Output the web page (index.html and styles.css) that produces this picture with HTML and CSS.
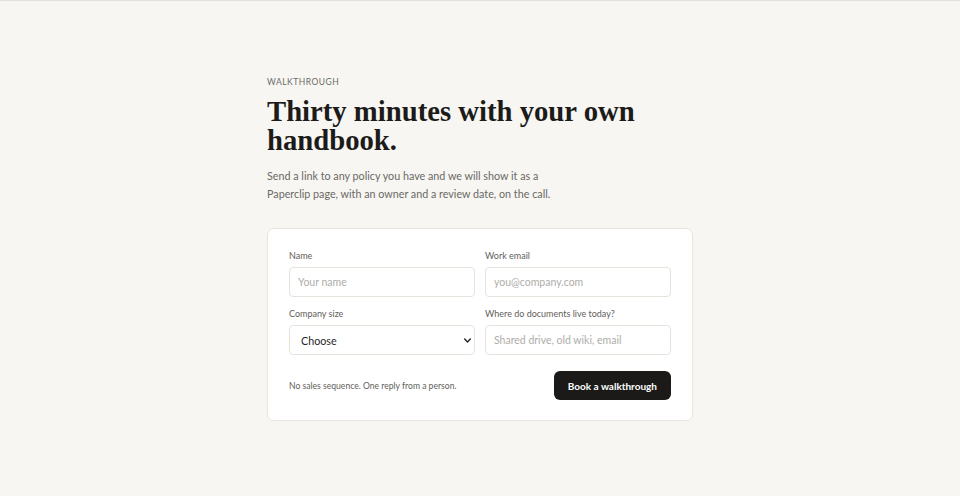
FILE: index.html
```html
<!DOCTYPE html>
<html lang="en">
<head>
<meta charset="utf-8">
<title>Book a walkthrough</title>
<link rel="stylesheet" href="styles.css">
</head>
<body>
<div class="topline"></div>
<main class="wrap">
  <p class="eyebrow">WALKTHROUGH</p>
  <h1 class="title">Thirty minutes with your own handbook.</h1>
  <p class="lede">Send a link to any policy you have and we will show it as a Paperclip page, with an owner and a review date, on the call.</p>
  <form class="card">
    <div class="grid">
      <label class="field">
        <span class="label">Name</span>
        <input class="input" type="text" placeholder="Your name">
      </label>
      <label class="field">
        <span class="label">Work email</span>
        <input class="input" type="email" placeholder="you@company.com">
      </label>
      <label class="field">
        <span class="label">Company size</span>
        <span class="select-wrap">
          <select class="input select">
            <option>Choose</option>
            <option>1–50</option>
            <option>51–200</option>
            <option>201+</option>
          </select>
          <svg class="chev" viewBox="0 0 10 6" width="7" height="5"><path d="M1 1l4 4 4-4" fill="none" stroke="#222" stroke-width="2" stroke-linecap="round" stroke-linejoin="round"/></svg>
        </span>
      </label>
      <label class="field">
        <span class="label">Where do documents live today?</span>
        <input class="input" type="text" placeholder="Shared drive, old wiki, email">
      </label>
    </div>
    <div class="foot">
      <span class="note">No sales sequence. One reply from a person.</span>
      <button class="btn" type="button">Book a walkthrough</button>
    </div>
  </form>
</main>
</body>
</html>
```
FILE: styles.css
```css
* { box-sizing: border-box; }
html, body { margin: 0; padding: 0; }
body {
  background: #f7f6f2;
  font-family: "Lato", "Liberation Sans", sans-serif;
  color: #1a1a1a;
  height: 496px;
  overflow: hidden;
}
.topline { height: 1px; background: #e4e1da; }
.wrap {
  width: 426px;
  margin: 0 auto;
  padding-top: 75px;
}
.eyebrow {
  margin: 0;
  font-size: 8.5px;
  letter-spacing: 0.5px;
  color: #6b6a66;
  line-height: 12px;
}
.title {
  margin: 9px 0 0;
  font-family: "Liberation Serif", "DejaVu Serif", serif;
  font-weight: 700;
  font-size: 28.7px;
  line-height: 29px;
  letter-spacing: 0;
  color: #1c1b19;
}
.lede {
  margin: 12px 0 0;
  font-size: 10.75px;
  line-height: 17.5px;
  color: #6a6965;
  width: 295px;
}
.card {
  margin-top: 26px;
  background: #fff;
  border: 1px solid #e8e5de;
  border-radius: 7px;
  padding: 21px 21px 20px;
}
.grid {
  display: grid;
  grid-template-columns: 1fr 1fr;
  column-gap: 10px;
  row-gap: 11px;
}
.field { display: flex; flex-direction: column; }
.label {
  font-size: 9px;
  line-height: 12px;
  color: #5f5e5a;
  margin-bottom: 5px;
}
.input {
  height: 30px;
  width: 100%;
  border: 1px solid #e6e3dc;
  border-radius: 4px;
  background: #fff;
  padding: 0 8px;
  font-family: inherit;
  font-size: 10.5px;
  color: #1a1a1a;
  outline: none;
}
.input::placeholder { color: #aeada9; }
.select-wrap { position: relative; display: block; }
.select {
  appearance: none;
  -webkit-appearance: none;
  padding-left: 11px;
  font-size: 10.75px;
  color: #1f1f1f;
}
.chev { position: absolute; right: 4px; top: 13px; pointer-events: none; }
.foot {
  margin-top: 16px;
  display: flex;
  align-items: center;
  justify-content: space-between;
}
.note { font-size: 8.6px; color: #5f5e5a; }
.btn {
  height: 29px;
  padding: 0 14px;
  border: none;
  border-radius: 6px;
  background: #1b1a18;
  color: #fff;
  font-family: inherit;
  font-size: 10px;
  font-weight: 700;
}
```
